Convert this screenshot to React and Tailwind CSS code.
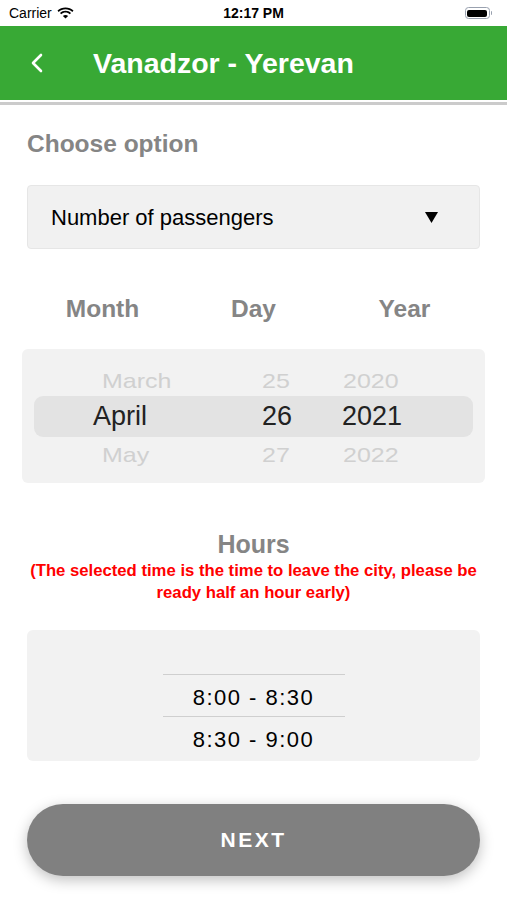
import React from "react";

const font = { fontFamily: '"Liberation Sans", Arial, sans-serif' };

const StatusBar = () => (
  <div className="h-[26px] flex items-center justify-between px-[9px] text-[14px] text-black relative">
    <div className="flex items-center gap-[5px]">
      <span>Carrier</span>
      <svg width="17" height="12" viewBox="0 0 17 12">
        <path d="M8.5 2.2c2.6 0 5 1 6.8 2.7l1.2-1.3C14.4 1.6 11.6.4 8.5.4S2.6 1.6.5 3.6l1.2 1.3C3.5 3.2 5.9 2.2 8.5 2.2z" fill="#000" />
        <path d="M8.5 5.6c1.6 0 3.1.6 4.3 1.7l1.2-1.3C12.5 4.6 10.6 3.8 8.5 3.8S4.5 4.6 3 6l1.2 1.3c1.2-1.1 2.7-1.7 4.3-1.7z" fill="#000" />
        <path d="M8.5 11.6l2.6-2.7c-.7-.6-1.6-1-2.6-1s-1.9.4-2.6 1z" fill="#000" />
      </svg>
    </div>
    <span className="absolute left-1/2 -translate-x-1/2 font-bold">12:17 PM</span>
    <div className="flex items-center mr-[6px]">
      <div className="w-[25px] h-[12px] rounded-[3.5px] border border-gray-400 p-[1.5px]">
        <div className="w-full h-full bg-black rounded-[2px]" />
      </div>
      <div className="w-[1.5px] h-[4px] bg-gray-400 rounded-r ml-[1px]" />
    </div>
  </div>
);

const Header = () => (
  <div>
    <div className="h-[74px] bg-[#38a935] flex items-center text-white">
      <svg width="16" height="24" viewBox="0 0 16 24" className="ml-[29px]">
        <path d="M12 4 L4 12 L12 20" stroke="#fff" strokeWidth="2.6" fill="none" strokeLinecap="round" strokeLinejoin="round" />
      </svg>
      <span className="ml-[48px] text-[28.5px] font-bold">Vanadzor - Yerevan</span>
    </div>
    <div className="h-[2px] bg-white" />
    <div className="h-[3px] bg-[#cbcbcb]" />
  </div>
);

const Faded = ({ children, pad }) => (
  <span className={pad}>
    <span className="inline-block scale-y-[0.8]">{children}</span>
  </span>
);

const Picker = () => (
  <div className="mx-[22px] mt-[25px] h-[134px] bg-[#f2f2f2] rounded-md flex flex-col justify-center px-[12px]">
    <div className="grid grid-cols-[165px_110px_165px] text-[25px] text-[#d0d0d0] h-[33px] items-center">
      <Faded pad="pl-[68px]">March</Faded>
      <Faded pad="pl-[63px]">25</Faded>
      <Faded pad="pl-[34px]">2020</Faded>
    </div>
    <div className="grid grid-cols-[165px_110px_165px] text-[27px] text-[#222] h-[41px] items-center bg-[#e3e3e3] rounded-[9px]">
      <span className="pl-[59px]">April</span>
      <span className="pl-[63px]">26</span>
      <span className="pl-[33px]">2021</span>
    </div>
    <div className="grid grid-cols-[165px_110px_165px] text-[25px] text-[#d0d0d0] h-[33px] items-center">
      <Faded pad="pl-[68px]">May</Faded>
      <Faded pad="pl-[63px]">27</Faded>
      <Faded pad="pl-[34px]">2022</Faded>
    </div>
  </div>
);

export default function App() {
  return (
    <div className="w-[507px] h-[900px] bg-white overflow-hidden" style={font}>
      <StatusBar />
      <Header />
      <div className="px-[27px]">
        <div className="mt-[24px] text-[24.5px] leading-[30px] font-bold text-[#858585]">Choose option</div>
        <div className="mt-[26px] h-[64px] bg-[#f1f1f1] border border-[#e6e6e6] rounded-[4px] flex items-center justify-between pl-[23px] pr-[41px]">
          <span className="text-[22px] text-black">Number of passengers</span>
          <svg width="13" height="11" viewBox="0 0 13 11">
            <path d="M0 0 H13 L6.5 11 Z" fill="#000" />
          </svg>
        </div>
        <div className="mt-[45px] grid grid-cols-3 text-[24.5px] leading-[30px] font-bold text-[#858585] text-center">
          <span>Month</span>
          <span>Day</span>
          <span>Year</span>
        </div>
      </div>
      <Picker />
      <div className="mt-[46px] text-center">
        <div className="text-[25px] leading-[30px] font-bold text-[#858585]">Hours</div>
        <div className="mt-[1px] text-[16.7px] leading-[22px] font-bold text-[#ff0000] px-[24px]">
          (The selected time is the time to leave the city, please be ready half an hour early)
        </div>
      </div>
      <div className="mx-[27px] mt-[26px] h-[131px] bg-[#f2f2f2] rounded-[6px] flex flex-col items-center pt-[44px]">
        <div className="w-[182px] border-t border-[#cfcfcf] h-[42px] flex items-center justify-center pt-[3px] text-[22px] tracking-[1.5px] text-black">
          8:00 - 8:30
        </div>
        <div className="w-[182px] border-t border-[#cfcfcf] h-[42px] flex items-center justify-center pt-[3px] text-[22px] tracking-[1.5px] text-black">
          8:30 - 9:00
        </div>
      </div>
      <div className="mx-[27px] mt-[43px] h-[72px] rounded-full bg-[#808080] shadow-[0_4px_14px_rgba(0,0,0,0.25)] flex items-center justify-center">
        <span className="text-white font-bold text-[21px] tracking-[2.5px]">NEXT</span>
      </div>
    </div>
  );
}
